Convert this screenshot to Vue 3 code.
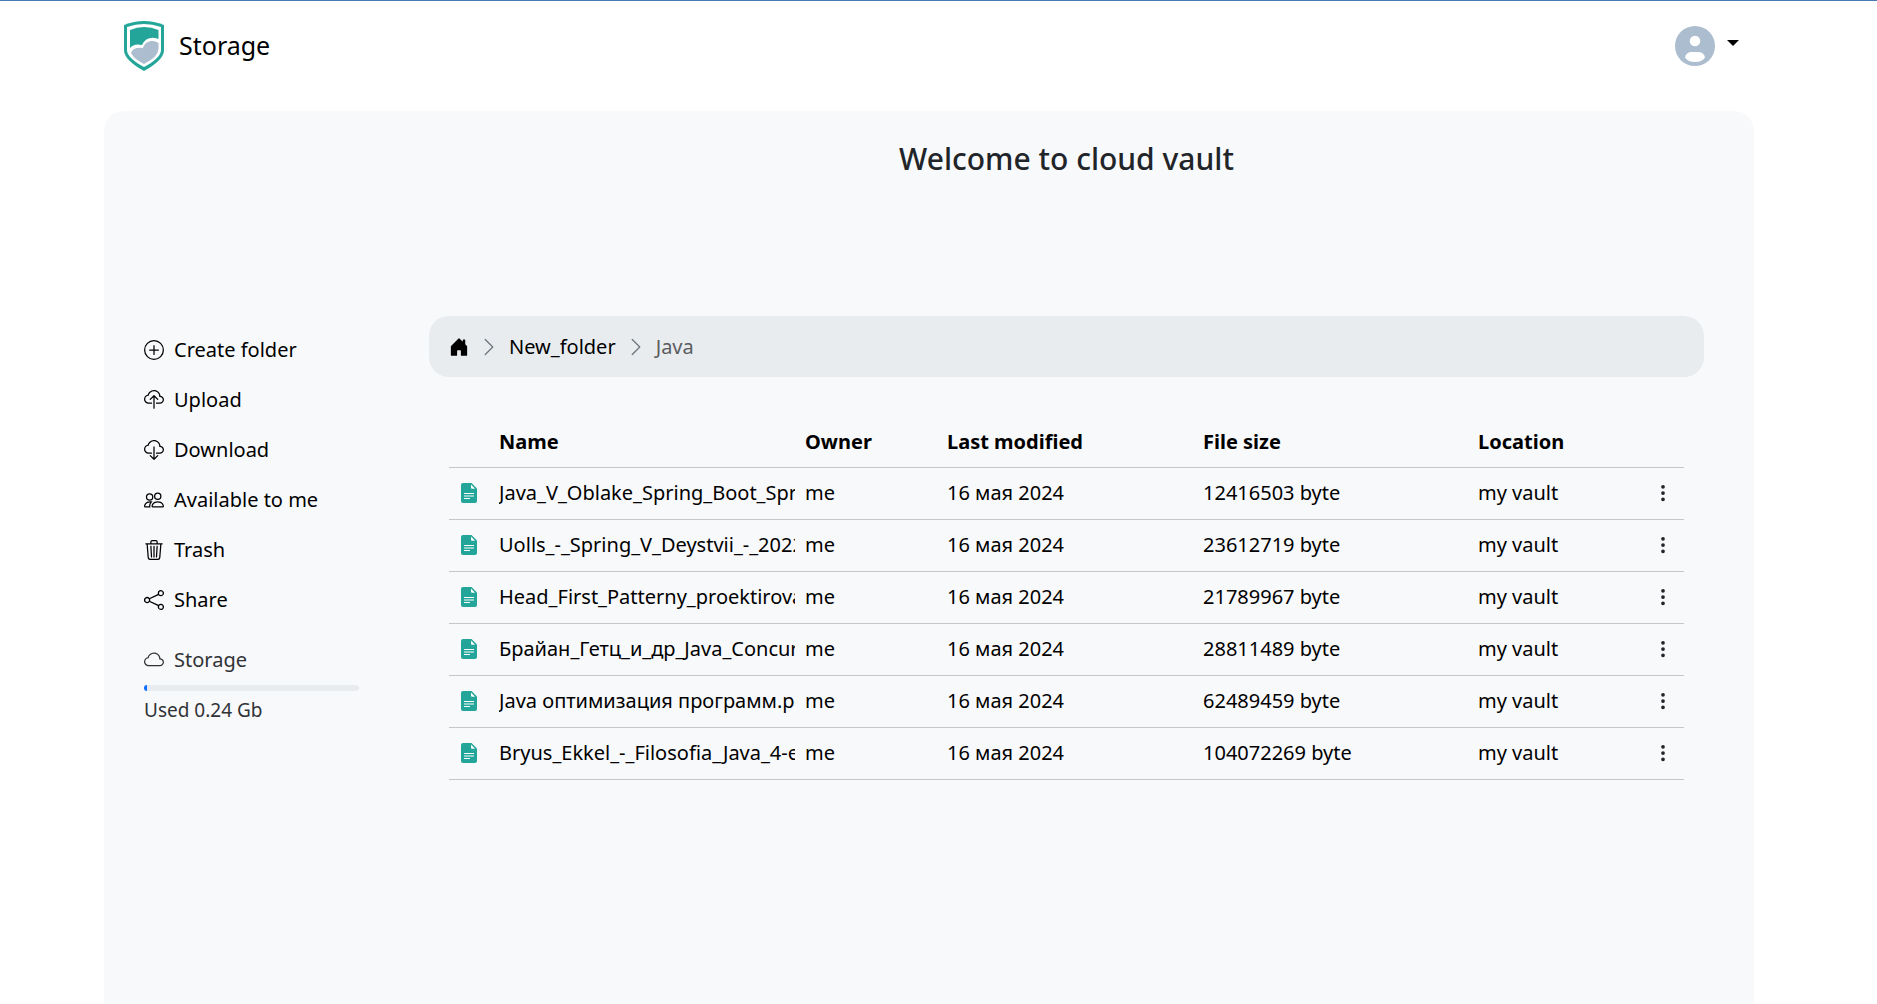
<script setup>
import { ref } from 'vue'

const cloudOutline =
  'M4.406 1.342A5.53 5.53 0 0 1 8 0c2.69 0 4.923 2 5.166 4.579C14.758 4.804 16 6.137 16 7.773 16 9.569 14.502 11 12.687 11H10a.5.5 0 0 1 0-1h2.688C13.979 10 15 8.988 15 7.773c0-1.216-1.02-2.228-2.313-2.228h-.5v-.5C12.188 2.825 10.328 1 8 1a4.53 4.53 0 0 0-2.941 1.1c-.757.652-1.153 1.438-1.153 2.055v.448l-.445.049C2.064 4.805 1 5.952 1 7.318 1 8.785 2.23 10 3.781 10H6a.5.5 0 0 1 0 1H3.781C1.708 11 0 9.366 0 7.318c0-1.763 1.266-3.223 2.942-3.593.143-.863.698-1.723 1.464-2.383'

const actions = [
  {
    label: 'Create folder',
    paths: [
      'M8 15A7 7 0 1 1 8 1a7 7 0 0 1 0 14m0 1A8 8 0 1 0 8 0a8 8 0 0 0 0 16',
      'M8 4a.5.5 0 0 1 .5.5v3h3a.5.5 0 0 1 0 1h-3v3a.5.5 0 0 1-1 0v-3h-3a.5.5 0 0 1 0-1h3v-3A.5.5 0 0 1 8 4',
    ],
  },
  {
    label: 'Upload',
    paths: [
      cloudOutline,
      'M7.646 4.146a.5.5 0 0 1 .708 0l3 3a.5.5 0 0 1-.708.708L8.5 5.707V14.5a.5.5 0 0 1-1 0V5.707L5.354 7.854a.5.5 0 1 1-.708-.708z',
    ],
  },
  {
    label: 'Download',
    paths: [
      cloudOutline,
      'M7.646 15.854a.5.5 0 0 0 .708 0l3-3a.5.5 0 0 0-.708-.708L8.5 14.293V5.5a.5.5 0 0 0-1 0v8.793l-2.146-2.147a.5.5 0 0 0-.708.708z',
    ],
  },
  {
    label: 'Available to me',
    paths: [
      'M15 14s1 0 1-1-1-4-5-4-5 3-5 4 1 1 1 1zm-7.978-1L7 12.996c.001-.264.167-1.03.76-1.72C8.312 10.629 9.282 10 11 10c1.717 0 2.687.63 3.24 1.276.593.69.758 1.457.76 1.72l-.008.002-.014.002zM11 7a2 2 0 1 0 0-4 2 2 0 0 0 0 4m3-2a3 3 0 1 1-6 0 3 3 0 0 1 6 0M6.936 9.28a6 6 0 0 0-1.23-.247A7 7 0 0 0 5 9c-4 0-5 3-5 4q0 1 1 1h4.216A2.24 2.24 0 0 1 5 13c0-1.01.377-2.042 1.09-2.904.243-.294.526-.569.846-.816M4.92 10A5.5 5.5 0 0 0 4 13H1c0-.26.164-1.03.76-1.724.545-.636 1.492-1.256 3.16-1.275ZM1.5 5.5a3 3 0 1 1 6 0 3 3 0 0 1-6 0m3-2a2 2 0 1 0 0 4 2 2 0 0 0 0-4',
    ],
  },
  {
    label: 'Trash',
    paths: [
      'M6.5 1h3a.5.5 0 0 1 .5.5v1H6v-1a.5.5 0 0 1 .5-.5M11 2.5v-1A1.5 1.5 0 0 0 9.5 0h-3A1.5 1.5 0 0 0 5 1.5v1H1.5a.5.5 0 0 0 0 1h.538l.853 10.66A2 2 0 0 0 4.885 16h6.23a2 2 0 0 0 1.994-1.84l.853-10.66h.538a.5.5 0 0 0 0-1zm1.958 1-.846 10.58a1 1 0 0 1-.997.92h-6.23a1 1 0 0 1-.997-.92L3.042 3.5zm-7.487 1a.5.5 0 0 1 .528.47l.5 8.5a.5.5 0 0 1-.998.06L5 5.03a.5.5 0 0 1 .47-.53Zm5.058 0a.5.5 0 0 1 .47.53l-.5 8.5a.5.5 0 1 1-.998-.06l.5-8.5a.5.5 0 0 1 .528-.47M8 4.5a.5.5 0 0 1 .5.5v8.5a.5.5 0 0 1-1 0V5a.5.5 0 0 1 .5-.5',
    ],
  },
  {
    label: 'Share',
    paths: [
      'M13.5 1a1.5 1.5 0 1 0 0 3 1.5 1.5 0 0 0 0-3M11 2.5a2.5 2.5 0 1 1 .603 1.628l-6.718 3.12a2.5 2.5 0 0 1 0 1.504l6.718 3.12a2.5 2.5 0 1 1-.488.876l-6.718-3.12a2.5 2.5 0 1 1 0-3.256l6.718-3.12A2.5 2.5 0 0 1 11 2.5m-8.5 4a1.5 1.5 0 1 0 0 3 1.5 1.5 0 0 0 0-3m11 5.5a1.5 1.5 0 1 0 0 3 1.5 1.5 0 0 0 0-3',
    ],
  },
]

const chevron =
  'M4.646 1.646a.5.5 0 0 1 .708 0l6 6a.5.5 0 0 1 0 .708l-6 6a.5.5 0 0 1-.708-.708L10.293 8 4.646 2.354a.5.5 0 0 1 0-.708'

const usedPercent = ref(1.5)

const files = [
  { name: 'Java_V_Oblake_Spring_Boot_Spring_Cloud.pdf', size: 12416503 },
  { name: 'Uolls_-_Spring_V_Deystvii_-_2022.pdf', size: 23612719 },
  { name: 'Head_First_Patterny_proektirovania.pdf', size: 21789967 },
  { name: 'Брайан_Гетц_и_др_Java_Concurrency.pdf', size: 28811489 },
  { name: 'Java оптимизация программ.pdf', size: 62489459 },
  { name: 'Bryus_Ekkel_-_Filosofia_Java_4-e_izd.pdf', size: 104072269 },
]
</script>

<template>
  <div class="page">
    <header class="navbar">
      <a class="brand" href="#">
        <svg class="logo" viewBox="0 0 40 50" aria-hidden="true">
          <path fill="#23a699" d="M0 4Q20-4 40 4V29Q40 39 20 50Q0 39 0 29Z" />
          <path fill="#fff" d="M3 6Q20 0 37 6V29Q37 37 20 46Q3 37 3 29Z" />
          <path fill="#23a699" d="M6 9Q20 3 34.500 9V18Q23 14 18 24Q10 22 6 27Z" />
          <path fill="#abbdce" d="M7 32Q9 26 19 27C21 20 29 18 34.500 22V28Q34 36 20 43Q10 38 7 32Z" />
        </svg>
        <span>Storage</span>
      </a>
      <button class="account" type="button" aria-label="Account menu">
        <svg class="avatar" viewBox="0 0 40 40" aria-hidden="true">
          <circle cx="20" cy="20" r="20" fill="#abbdce" />
          <circle cx="20" cy="15" r="5.300" fill="#fff" />
          <path fill="#fff" d="M10 31.500Q11 26 17 26H23Q29 26 30 31.500Q27 36 20 36Q13 36 10 31.500Z" />
        </svg>
        <span class="caret"></span>
      </button>
    </header>

    <div class="panel">
      <aside class="sidebar">
        <nav class="actions">
          <a v-for="action in actions" :key="action.label" class="action" href="#">
            <svg class="icon" viewBox="0 0 16 16" aria-hidden="true">
              <path v-for="d in action.paths" :key="d" :d="d" fill-rule="evenodd" />
            </svg>
            <span>{{ action.label }}</span>
          </a>
        </nav>
        <div class="usage">
          <div class="action usage-title">
            <svg class="icon" viewBox="0 0 16 16" aria-hidden="true">
              <path d="M4.406 3.342A5.53 5.53 0 0 1 8 2c2.69 0 4.923 2 5.166 4.579C14.758 6.804 16 8.137 16 9.773 16 11.569 14.502 13 12.687 13H3.781C1.708 13 0 11.366 0 9.318c0-1.763 1.266-3.223 2.942-3.593.143-.863.698-1.723 1.464-2.383m.653.757c-.757.653-1.153 1.44-1.153 2.056v.448l-.445.049C2.064 6.805 1 7.952 1 9.318 1 10.785 2.23 12 3.781 12h8.906C13.98 12 15 10.988 15 9.773c0-1.216-1.02-2.228-2.313-2.228h-.5v-.5C12.188 4.825 10.328 3 8 3a4.53 4.53 0 0 0-2.941 1.1z" />
            </svg>
            <span>Storage</span>
          </div>
          <div class="progress" role="progressbar" aria-label="Storage used">
            <div class="progress-bar" :style="{ width: usedPercent + '%' }"></div>
          </div>
          <div class="used">Used 0.24 Gb</div>
        </div>
      </aside>

      <main class="content">
        <h1 class="title">Welcome to cloud vault</h1>

        <nav class="breadcrumb" aria-label="Breadcrumb">
          <a class="crumb" href="#" aria-label="Home">
            <svg class="icon" viewBox="0 0 16 16" aria-hidden="true">
              <path d="M6.5 14.500v-3.505c0-.245.25-.495.5-.495h2c.25 0 .5.25.5.5v3.500a.5.5 0 0 0 .5.5h4a.5.5 0 0 0 .5-.5v-7a.5.5 0 0 0-.146-.354L13 5.793V2.500a.5.5 0 0 0-.5-.5h-1a.5.5 0 0 0-.5.5v1.293L8.354 1.146a.5.5 0 0 0-.708 0l-6 6A.5.5 0 0 0 1.500 7.500v7a.5.5 0 0 0 .5.5h4a.5.5 0 0 0 .5-.5" />
            </svg>
          </a>
          <svg class="icon separator" viewBox="0 0 16 16" aria-hidden="true"><path :d="chevron" /></svg>
          <a class="crumb" href="#">New_folder</a>
          <svg class="icon separator" viewBox="0 0 16 16" aria-hidden="true"><path :d="chevron" /></svg>
          <span class="current">Java</span>
        </nav>

        <table class="files">
          <colgroup>
            <col class="col-icon" />
            <col class="col-name" />
            <col class="col-owner" />
            <col class="col-modified" />
            <col class="col-size" />
            <col />
            <col class="col-menu" />
          </colgroup>
          <thead>
            <tr>
              <th></th>
              <th scope="col">Name</th>
              <th scope="col">Owner</th>
              <th scope="col">Last modified</th>
              <th scope="col">File size</th>
              <th scope="col">Location</th>
              <th></th>
            </tr>
          </thead>
          <tbody>
            <tr v-for="file in files" :key="file.name">
              <td>
                <svg class="file-icon" viewBox="0 0 16 20" aria-hidden="true">
                  <path fill="#23a699" d="M2 0H10.500L16 5.500V18A2 2 0 0 1 14 20H2A2 2 0 0 1 0 18V2A2 2 0 0 1 2 0Z" />
                  <path fill="#fff" d="M10 1.500 14 5.700H11A1 1 0 0 1 10 4.700Z" />
                  <path stroke="#fff" stroke-width="1.200" d="M3 10.500H13M3 13H13M3 15.500H9" />
                </svg>
              </td>
              <td><div class="file-name">{{ file.name }}</div></td>
              <td>me</td>
              <td>16 мая 2024</td>
              <td>{{ file.size }} byte</td>
              <td>my vault</td>
              <td>
                <button class="menu" type="button" :aria-label="'Actions for ' + file.name">
                  <svg class="icon" viewBox="0 0 16 16" aria-hidden="true">
                    <path d="M9.500 13a1.500 1.500 0 1 1-3 0 1.500 1.500 0 0 1 3 0m0-5a1.500 1.500 0 1 1-3 0 1.500 1.500 0 0 1 3 0m0-5a1.500 1.500 0 1 1-3 0 1.500 1.500 0 0 1 3 0" />
                  </svg>
                </button>
              </td>
            </tr>
          </tbody>
        </table>
      </main>
    </div>
  </div>
</template>

<style>
body {
  margin: 0;
  background: #fff;
}
</style>

<style scoped>
.page {
  box-sizing: border-box;
  display: flex;
  flex-direction: column;
  min-height: 100vh;
  padding-right: 19px;
  border-top: 1px solid #4a78b5;
  font: 400 20px/30px 'Noto Sans', 'Liberation Sans', sans-serif;
  color: #212529;
}

.navbar,
.panel {
  box-sizing: border-box;
  width: 100%;
  max-width: 1650px;
  margin: 0 auto;
}

.navbar {
  display: flex;
  align-items: center;
  justify-content: space-between;
  height: 110px;
  padding: 0 15px 20px 20px;
}

.brand {
  display: flex;
  align-items: center;
  gap: 15px;
  color: #000;
  font-size: 25px;
  text-decoration: none;
}

.brand span {
  padding-bottom: 3px;
}

.logo {
  width: 40px;
  height: 50px;
}

.account {
  display: flex;
  align-items: center;
  gap: 12px;
  padding: 0;
  border: 0;
  background: none;
}

.avatar {
  width: 40px;
  height: 40px;
}

.caret {
  margin-bottom: 6px;
  border: 6px solid transparent;
  border-top-color: #000;
  border-bottom: 0;
}

.panel {
  display: flex;
  flex: 1;
  gap: 70px;
  padding: 30px 50px 60px 40px;
  border-radius: 20px 20px 0 0;
  background: #f8f9fb;
}

.sidebar {
  flex: none;
  width: 215px;
  padding-top: 194px;
}

.actions {
  display: flex;
  flex-direction: column;
  gap: 20px;
}

.action {
  display: flex;
  align-items: center;
  gap: 10px;
  color: #000;
  text-decoration: none;
}

.icon {
  display: block;
  flex: none;
  width: 20px;
  height: 20px;
  fill: currentColor;
}

.usage {
  margin-top: 30px;
}

.usage-title,
.used {
  color: #303336;
}

.used {
  font-size: 19px;
}

.progress {
  display: flex;
  height: 6px;
  margin: 10px 0 4px;
  border-radius: 3px;
  overflow: hidden;
  background: #e9ecef;
}

.progress-bar {
  background: #0d6efd;
}

.content {
  flex: 1;
  min-width: 0;
}

.title {
  margin: 0;
  font-size: 30px;
  font-weight: 500;
  line-height: 36px;
  text-align: center;
}

.breadcrumb {
  display: flex;
  align-items: center;
  gap: 10px;
  height: 61px;
  margin-top: 139px;
  padding: 0 20px;
  border-radius: 20px;
  background: #e9ecef;
}

.crumb {
  color: #000;
  text-decoration: none;
}

.separator {
  color: #6c757d;
}

.current {
  color: #595c5f;
}

.files {
  width: calc(100% - 40px);
  margin: 39px 20px 0;
  border-collapse: collapse;
  table-layout: fixed;
  color: #000;
}

.files th,
.files td {
  height: 51px;
  padding: 0 10px;
  border-bottom: 1px solid #c6c7c8;
  text-align: left;
}

.files th {
  font-weight: 700;
}

.files td {
  height: 49px;
  padding-bottom: 2px;
}

.col-icon {
  width: 40px;
}

.col-menu {
  width: 41px;
}

.col-name {
  width: 306px;
}

.col-owner {
  width: 142px;
}

.col-modified {
  width: 256px;
}

.col-size {
  width: 275px;
}

.file-icon {
  display: block;
  width: 16px;
  height: 20px;
  margin-left: 2px;
}

.file-name {
  margin-right: -10px;
  overflow: hidden;
  white-space: nowrap;
}

.menu {
  display: block;
  padding: 0;
  border: 0;
  background: none;
  color: #212529;
}
</style>
